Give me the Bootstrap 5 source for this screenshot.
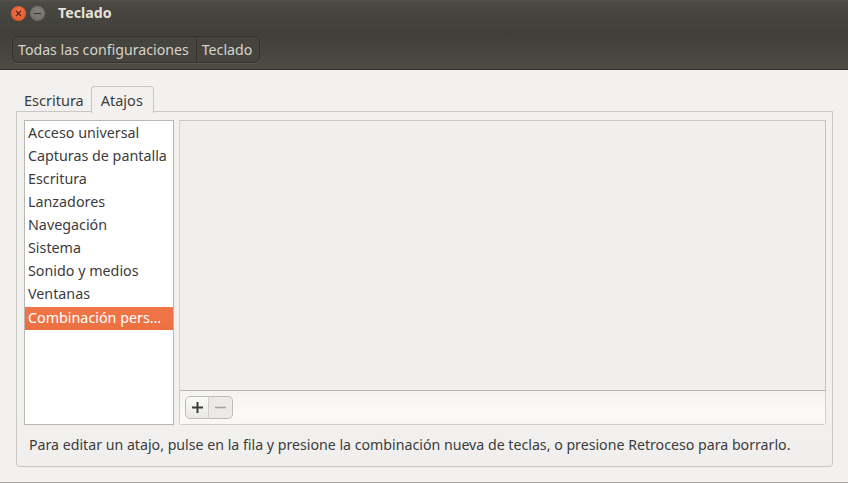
<!DOCTYPE html>
<html lang="es">
<head>
<meta charset="utf-8">
<title>Teclado</title>
<link rel="stylesheet" href="https://cdn.jsdelivr.net/npm/bootstrap@5.3.0/dist/css/bootstrap.min.css">
<style>
html,body{height:483px;overflow:hidden}
body{background:#f2f1ef;font-family:"Noto Sans","Open Sans",sans-serif;font-size:14px;color:#3c3c3c;letter-spacing:0}
.topbar{height:70px;background:linear-gradient(#55524b 0,#4a4842 3px,#403f3a 34px,#4c4b44 68px);border-bottom:1px solid #2f2e2b;padding:0 0 0 11px;color:#dfdbd2}
.titlerow{height:26px;gap:4px}
.wbtn{width:15px;height:15px;border-radius:50%;display:flex;align-items:center;justify-content:center}
.wclose{background:radial-gradient(circle at 50% 40%,#f4764a,#de4e22)}
.wmin{background:radial-gradient(circle at 50% 40%,#85827b,#686660)}
.wtitle{margin-left:9px;font-weight:700;font-size:14.2px;color:#e6e2d9}
.crumbs{margin-top:10px;margin-left:1px;height:27px;border:1px solid #33322e;border-radius:5px;background:#45443e;width:max-content;box-shadow:0 1px 0 #5a5952}
.crumb{padding:0 7px 0 5px;line-height:25px;font-size:14.17px;color:#d8d4cb}
.crumb+.crumb{border-left:1px solid #33322e;padding:0 7px 0 5px}
.mainarea{padding:16px 15px 0 16px}
.nav-tabs.tabbar{border:0;padding-left:1px;height:25px;position:relative;z-index:1;align-items:flex-end}
.tabbar .nav-link{border:1px solid transparent;border-bottom:0;border-radius:4px 4px 0 0;color:#3c3c3c;padding:0 6px;font-size:14.5px;line-height:24px;margin:0;background:transparent}
.tabbar .nav-link.active{background:#f2f1ef;border-color:#c9c7c2;height:27px;margin-bottom:-1px;padding:0 10px 0 9px;line-height:26px;color:#3c3c3c}
.tabbody{height:356px;border:1px solid #c9c7c2;border-radius:0 0 3px 3px;padding:8px 7px 0 7px;background:linear-gradient(#f2f1ef 80%,#f0efed)}
.catlist{width:150px;height:305px;border:1px solid #b9b7b2;border-radius:0;background:#fff;flex:none;padding-top:1px}
.catlist .list-group-item{border:0;border-radius:0;background:transparent;color:#3c3c3c;padding:0 3px;height:23px;line-height:22px;font-size:14.3px;white-space:nowrap}
.catlist .list-group-item.active{background:linear-gradient(#f0774a,#ec6f41);color:#fff;height:23px;margin-top:1px;line-height:22px}
.rightcol{width:647px;margin-left:5px;height:305px;flex:none;border:1px solid #cfcdc8;border-radius:0 0 3px 3px}
.keyarea{height:271px;background:#f0efed;border-bottom:1px solid #b9b7b2;border-right:1px solid #c4c2bd;border-left:1px solid #d5d3ce;margin:-1px -1px 0;border-top:1px solid #c9c7c2}
.toolstrip{height:33px;padding:4px 5px;background:linear-gradient(#f4f3f1,#fbfaf9 70%,#f8f7f6)}
.tbtn.btn{height:23px;padding:0;border:1px solid #bdbbb6;display:flex;align-items:center;justify-content:center}
.tplus.btn{width:24px;background:linear-gradient(#fbfbfa,#e9e8e5);border-radius:5px 0 0 5px}
.tminus.btn{width:25px;background:#ebeae7;border-left:1px solid #d2d0cb;border-radius:0 5px 5px 0}
.hinttext{margin:10px 0 0 5px;font-size:14.18px;line-height:20px;color:#3c3c3c;white-space:nowrap}
.edgeline{position:absolute;left:0;right:0;top:482px;height:1px;background:#a9a8a4}
</style>
</head>
<body>
<header class="topbar">
  <div class="d-flex align-items-center titlerow">
    <span class="wbtn wclose"><svg width="7" height="7" viewBox="0 0 7 7"><path d="M1 1l5 5M6 1l-5 5" stroke="#5a2410" stroke-width="1.2"/></svg></span>
    <span class="wbtn wmin"><svg width="7" height="3" viewBox="0 0 7 3"><path d="M0 1.5h7" stroke="#3a3935" stroke-width="1.2"/></svg></span>
    <span class="wtitle">Teclado</span>
  </div>
  <div class="d-flex crumbs">
    <span class="crumb">Todas las configuraciones</span>
    <span class="crumb">Teclado</span>
  </div>
</header>
<main class="mainarea">
  <ul class="nav nav-tabs tabbar">
    <li class="nav-item"><a class="nav-link" href="#">Escritura</a></li>
    <li class="nav-item"><a class="nav-link active" href="#">Atajos</a></li>
  </ul>
  <div class="tabbody">
    <div class="d-flex">
      <div class="list-group catlist">
        <div class="list-group-item">Acceso universal</div>
        <div class="list-group-item">Capturas de pantalla</div>
        <div class="list-group-item">Escritura</div>
        <div class="list-group-item">Lanzadores</div>
        <div class="list-group-item">Navegación</div>
        <div class="list-group-item">Sistema</div>
        <div class="list-group-item">Sonido y medios</div>
        <div class="list-group-item">Ventanas</div>
        <div class="list-group-item active">Combinación pers…</div>
      </div>
      <div class="rightcol">
        <div class="keyarea"></div>
        <div class="toolstrip">
          <div class="btn-group">
            <button class="btn tbtn tplus" type="button" aria-label="Añadir"><svg width="11" height="11" viewBox="0 0 11 11"><path d="M5.5 0v11M0 5.5h11" stroke="#3c3c3c" stroke-width="2"/></svg></button>
            <button class="btn tbtn tminus" type="button" aria-label="Quitar"><svg width="11" height="11" viewBox="0 0 11 11"><path d="M0 5.5h11" stroke="#a5a4a0" stroke-width="1.6"/></svg></button>
          </div>
        </div>
      </div>
    </div>
    <p class="hinttext">Para editar un atajo, pulse en la fila y presione la combinación nueva de teclas, o presione Retroceso para borrarlo.</p>
  </div>
</main>
<div class="edgeline"></div>
</body>
</html>
